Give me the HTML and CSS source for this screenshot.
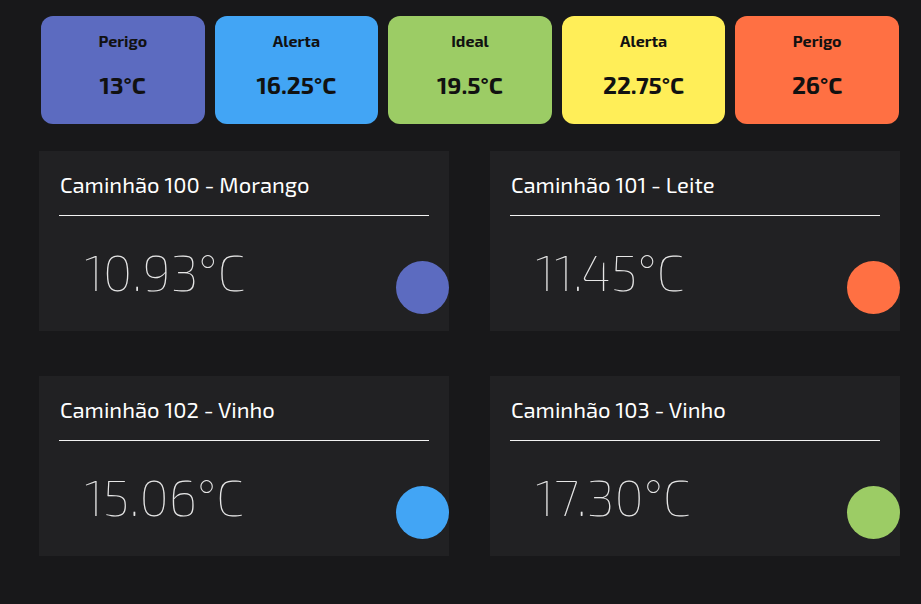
FILE: index.html
```html
<!DOCTYPE html>
<html lang="pt-BR">
<head>
<meta charset="utf-8">
<title>Monitor de Temperatura</title>
<link rel="stylesheet" href="styles.css">
</head>
<body>
  <div class="legend">
    <div class="legend-card purple"><div class="legend-label">Perigo</div><div class="legend-temp">13°C</div></div>
    <div class="legend-card blue"><div class="legend-label">Alerta</div><div class="legend-temp">16.25°C</div></div>
    <div class="legend-card green"><div class="legend-label">Ideal</div><div class="legend-temp">19.5°C</div></div>
    <div class="legend-card yellow"><div class="legend-label">Alerta</div><div class="legend-temp">22.75°C</div></div>
    <div class="legend-card orange"><div class="legend-label">Perigo</div><div class="legend-temp">26°C</div></div>
  </div>
  <div class="trucks">
    <div class="truck">
      <div class="truck-title">Caminhão 100 - Morango</div>
      <div class="truck-body"><div class="truck-temp">10.93°C</div><div class="dot purple"></div></div>
    </div>
    <div class="truck">
      <div class="truck-title">Caminhão 101 - Leite</div>
      <div class="truck-body"><div class="truck-temp">11.45°C</div><div class="dot orange"></div></div>
    </div>
    <div class="truck">
      <div class="truck-title">Caminhão 102 - Vinho</div>
      <div class="truck-body"><div class="truck-temp">15.06°C</div><div class="dot blue"></div></div>
    </div>
    <div class="truck">
      <div class="truck-title">Caminhão 103 - Vinho</div>
      <div class="truck-body"><div class="truck-temp">17.30°C</div><div class="dot green"></div></div>
    </div>
  </div>
</body>
</html>
```
FILE: styles.css
```css
html, body {
  margin: 0;
  padding: 0;
}
body {
  background: #18181a;
  font-family: "Exo 2", Roboto, "Noto Sans", sans-serif;
  width: 921px;
  height: 604px;
  overflow: hidden;
}
.legend {
  display: flex;
  gap: 10px;
  padding: 16px 22px 0 41px;
}
.legend-card {
  flex: 1;
  height: 108px;
  border-radius: 12px;
  text-align: center;
  color: #111;
  box-sizing: border-box;
  padding-top: 15px;
}
.legend-label {
  font-size: 16px;
  font-weight: 700;
  line-height: 20px;
}
.legend-temp {
  font-size: 24px;
  font-weight: 700;
  line-height: 30px;
  margin-top: 19px;
}
.purple { background: #5c6bc0; }
.blue { background: #42a5f5; }
.green { background: #9ccc65; }
.yellow { background: #ffee58; }
.orange { background: #ff7043; }

.trucks {
  display: grid;
  grid-template-columns: 410px 410px;
  column-gap: 41px;
  row-gap: 45px;
  padding-left: 39px;
  margin-top: 27px;
}
.truck {
  background: #212123;
  height: 180px;
  display: flex;
  flex-direction: column;
}
.truck-title {
  margin: 0 20px;
  padding: 18px 0 16px 1px;
  line-height: 30px;
  font-size: 22px;
  font-weight: 400;
  color: #fff;
  border-bottom: 1px solid #f2f2f2;
}
.truck-body {
  flex: 1;
  display: flex;
  justify-content: space-between;
  align-items: flex-end;
  padding: 0 0 17px 45px;
}
.truck-temp {
  align-self: flex-start;
  margin-top: 25px;
  font-size: 50px;
  font-weight: 100;
  line-height: 60px;
  color: #e6e6e6;
}
.dot {
  width: 53px;
  height: 53px;
  border-radius: 50%;
}
```
